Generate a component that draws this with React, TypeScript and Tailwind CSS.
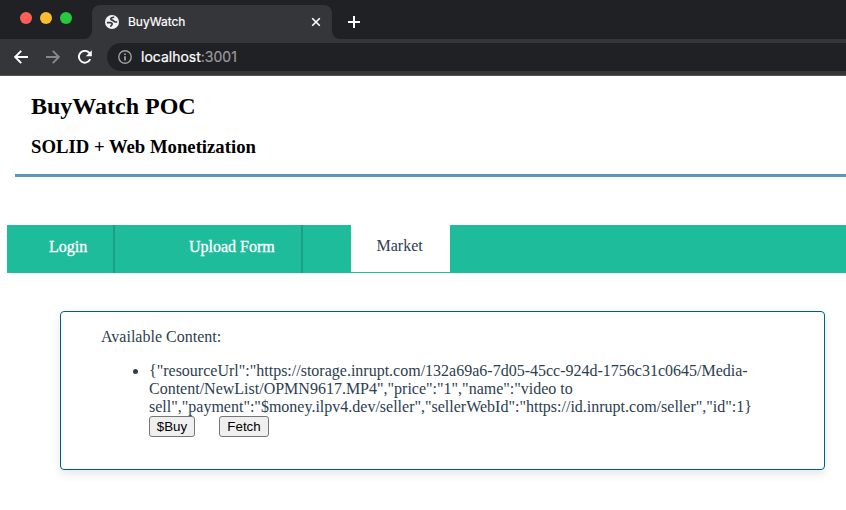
function GlobeIcon() {
  return (
    <svg className="size-[14px]" viewBox="0 0 14 14" fill="none">
      <circle cx="7" cy="7" r="7" fill="#f1f3f4" />
      <path
        d="M9.2 2.3C7.2 2.2 5.6 3.1 5.8 4.2 6 5.3 8 4.9 8.7 6c.5.9 1.9 1.1 3.5.7"
        stroke="#35363a"
        strokeWidth="1.6"
      />
      <path d="M1.9 7.6h3.3c1.5 0 2.3.8 1.9 1.8-.3.9-1.3.9-1.4 2.4" stroke="#35363a" strokeWidth="1.6" />
    </svg>
  );
}

function InfoIcon() {
  return (
    <svg className="size-[14px]" viewBox="0 0 14 14" fill="none" stroke="#9aa0a6">
      <circle cx="7" cy="7" r="6.2" strokeWidth="1.4" />
      <path d="M7 6.2v4.3M7 3.5v1.6" strokeWidth="1.8" />
    </svg>
  );
}

function ArrowIcon({ className }: { className: string }) {
  return (
    <svg className={className} viewBox="0 0 14 14" fill="none" stroke="currentColor" strokeWidth="1.9">
      <path d="M14 7H1.6M7.2 .8L1.2 7l6 6.2" />
    </svg>
  );
}

function ReloadIcon() {
  return (
    <svg className="ml-[18px] size-[14px] text-white" viewBox="0 0 14 14">
      <path d="M12.2 9.2A5.9 5.9 0 1 1 11.3 2.9L12.2 3.8" fill="none" stroke="currentColor" strokeWidth="1.9" />
      <path d="M13.8.3v5.9H7.9Z" fill="currentColor" />
    </svg>
  );
}

function BrowserChrome() {
  return (
    <div className="h-[76px] bg-[#202124] font-['Inter',sans-serif]">
      <div className="flex h-[39px] items-end">
        <div className="flex h-full w-[84px] gap-2 pl-5 pt-3">
          <span className="size-3 rounded-full bg-[#ff5f57]" />
          <span className="size-3 rounded-full bg-[#febc2e]" />
          <span className="size-3 rounded-full bg-[#28c840]" />
        </div>
        <svg className="size-2" viewBox="0 0 8 8">
          <path d="M8 0v8H0a8 8 0 0 0 8-8Z" fill="#35363a" />
        </svg>
        <div className="flex h-[34px] w-[240px] items-center rounded-t-lg bg-[#35363a] pl-[13px] pr-[11px] text-white">
          <GlobeIcon />
          <span className="ml-[9px] text-[12px] leading-4 [-webkit-text-stroke:0.2px_white]">BuyWatch</span>
          <svg className="ml-auto size-[10px]" viewBox="0 0 10 10" fill="none" stroke="white" strokeWidth="1.6">
            <path d="M1.2 1.2l7.6 7.6M8.8 1.2L1.2 8.8" />
          </svg>
        </div>
        <svg className="size-2" viewBox="0 0 8 8">
          <path d="M0 0v8h8a8 8 0 0 1-8-8Z" fill="#35363a" />
        </svg>
        <svg className="mb-[11px] ml-2 size-3" viewBox="0 0 12 12" stroke="white" strokeWidth="2">
          <path d="M6 0v12M0 6h12" />
        </svg>
      </div>
      <div className="flex h-[37px] items-center border-b border-[#5b565b] bg-[#35363a] pl-[14px]">
        <ArrowIcon className="size-[14px] text-white" />
        <ArrowIcon className="ml-[18px] size-[14px] rotate-180 text-[#86878a]" />
        <ReloadIcon />
        <div className="ml-[15px] flex h-7 flex-1 items-center rounded-l-full bg-[#202124] pl-[11px]">
          <InfoIcon />
          <span className="ml-[9px] text-[14px] leading-5 text-white [-webkit-text-stroke:0.2px_white]">
            localhost<span className="text-[#9a9b9e] [-webkit-text-stroke:0.2px_#9a9b9e]">:3001</span>
          </span>
        </div>
      </div>
    </div>
  );
}

export default function App() {
  return (
    <div className="h-[510px] w-[846px] overflow-hidden bg-white font-['Liberation_Serif',serif] text-[16px] text-[#2c3e50]">
      <BrowserChrome />
      <header className="ml-[15px] h-[101px] border-b-[3px] border-[#5897bb] pl-4 pt-4 text-black">
        <h1 className="text-[24px] font-bold leading-7">BuyWatch POC</h1>
        <h2 className="mt-4 text-[18.72px] font-bold leading-[22px]">SOLID + Web Monetization</h2>
      </header>
      <nav className="ml-[7px] mt-12 flex h-12 bg-[#1fbc9c] leading-[18px] text-white">
        <div className="w-[108px] border-r-2 border-[#1aa085] pl-[42px] pt-[13px] [-webkit-text-stroke:0.3px_white]">Login</div>
        <div className="w-[188px] border-r-2 border-[#1aa085] pl-[74px] pt-[13px] [-webkit-text-stroke:0.3px_white]">Upload Form</div>
        <div className="ml-12 h-[47px] w-[99px] bg-white pl-[25.5px] pt-3 text-[#2c3e50]">Market</div>
      </nav>
      <main className="ml-[60px] mt-[38px] h-[159px] w-[765px] rounded border border-[#005f86] pl-10 pt-4 leading-[18px] shadow-[0_4px_10px_rgba(0,50,30,0.11)]">
        <p>Available Content:</p>
        <ul className="mt-4 list-disc pl-12">
          <li>
            <div className="whitespace-nowrap">
              {'{"resourceUrl":"https://storage.inrupt.com/132a69a6-7d05-45cc-924d-1756c31c0645/Media-'}
              <br />
              {'Content/NewList/OPMN9617.MP4","price":"1","name":"video to'}
              <br />
              {'sell","payment":"$money.ilpv4.dev/seller","sellerWebId":"https://id.inrupt.com/seller","id":1}'}
            </div>
            <div className="flex gap-6 font-['Liberation_Sans',sans-serif] text-[13.33px] leading-[19px] text-black">
              <button className="h-[21px] w-[46px] rounded-[3px] border border-[#767676] bg-[#efefef]">$Buy</button>
              <button className="h-[21px] w-[50px] rounded-[3px] border border-[#767676] bg-[#efefef]">Fetch</button>
            </div>
          </li>
        </ul>
      </main>
    </div>
  );
}
